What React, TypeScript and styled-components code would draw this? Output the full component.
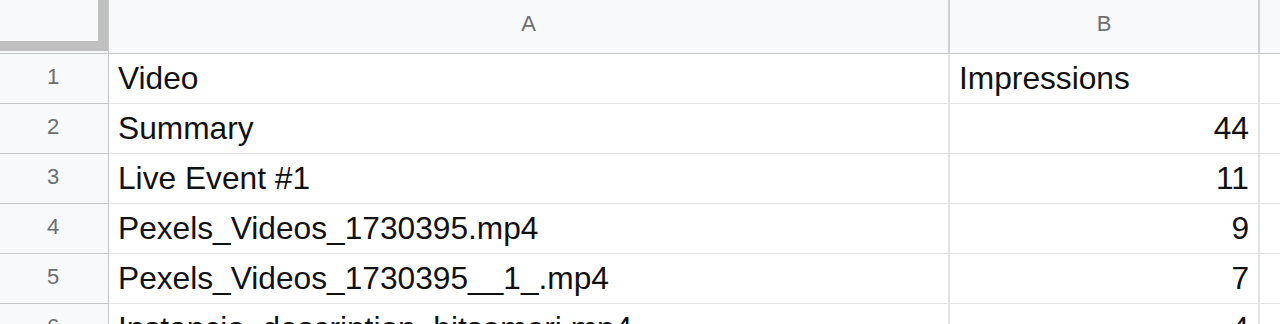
import React from "react"
import styled, { createGlobalStyle } from "styled-components"

const GlobalStyle = createGlobalStyle`
  html, body {
    margin: 0;
    padding: 0;
    background: #ffffff;
    overflow: hidden;
  }
`

type Row = {
  name: string
  impressions: string
  numeric: boolean
}

const rows: Row[] = [
  { name: "Video", impressions: "Impressions", numeric: false },
  { name: "Summary", impressions: "44", numeric: true },
  { name: "Live Event #1", impressions: "11", numeric: true },
  { name: "Pexels_Videos_1730395.mp4", impressions: "9", numeric: true },
  { name: "Pexels_Videos_1730395__1_.mp4", impressions: "7", numeric: true },
  { name: "Instancia_description_bitsomeri.mp4", impressions: "4", numeric: true },
]

const Sheet = styled.div`
  display: grid;
  grid-template-columns: 109px 841px 310px 1fr;
  grid-auto-rows: 50px;
  grid-template-rows: 54px;
  width: 1280px;
  font-family: "Liberation Sans", Arial, sans-serif;
`

const Corner = styled.div`
  box-sizing: border-box;
  background: #f8f9fa;
  border-right: 1px solid #c4c7c5;
  border-bottom: 1px solid #c4c7c5;
  display: flex;
  padding-bottom: 2px;
`

const CornerInner = styled.div`
  flex: 1;
  border-right: 10px solid #c0c0c0;
  border-bottom: 10px solid #c0c0c0;
`

const ColHeader = styled.div<{ $last?: boolean }>`
  box-sizing: border-box;
  background: #f8f9fa;
  border-right: ${(p) => (p.$last ? "none" : "2px solid #d0d0d0")};
  border-bottom: 1px solid #c4c7c5;
  color: #6b6e72;
  font-size: 22px;
  display: flex;
  align-items: center;
  justify-content: center;
  padding-bottom: 5px;
`

const RowHeader = styled.div`
  box-sizing: border-box;
  background: #f8f9fa;
  border-right: 1px solid #c4c7c5;
  border-bottom: 1px solid #c4c7c5;
  color: #6b6e72;
  font-size: 22px;
  display: flex;
  align-items: center;
  justify-content: center;
  padding-right: 2px;
  padding-bottom: 4px;
`

const Cell = styled.div<{ $align?: "left" | "right"; $last?: boolean }>`
  box-sizing: border-box;
  background: #ffffff;
  border-right: ${(p) => (p.$last ? "none" : "2px solid #e2e3e3")};
  border-bottom: 1px solid #e2e3e3;
  color: #111;
  font-size: 31.7px;
  line-height: 1.15;
  display: flex;
  align-items: center;
  justify-content: ${(p) => (p.$align === "right" ? "flex-end" : "flex-start")};
  padding: 0 9px 0 9px;
  white-space: nowrap;
  overflow: hidden;
`

export default function App() {
  return (
    <>
      <GlobalStyle />
      <Sheet>
        <Corner>
          <CornerInner />
        </Corner>
        <ColHeader>A</ColHeader>
        <ColHeader>B</ColHeader>
        <ColHeader $last />
        {rows.map((r, i) => (
          <React.Fragment key={i}>
            <RowHeader>{i + 1}</RowHeader>
            <Cell>{r.name}</Cell>
            <Cell $align={r.numeric ? "right" : "left"}>{r.impressions}</Cell>
            <Cell $last />
          </React.Fragment>
        ))}
      </Sheet>
    </>
  )
}
